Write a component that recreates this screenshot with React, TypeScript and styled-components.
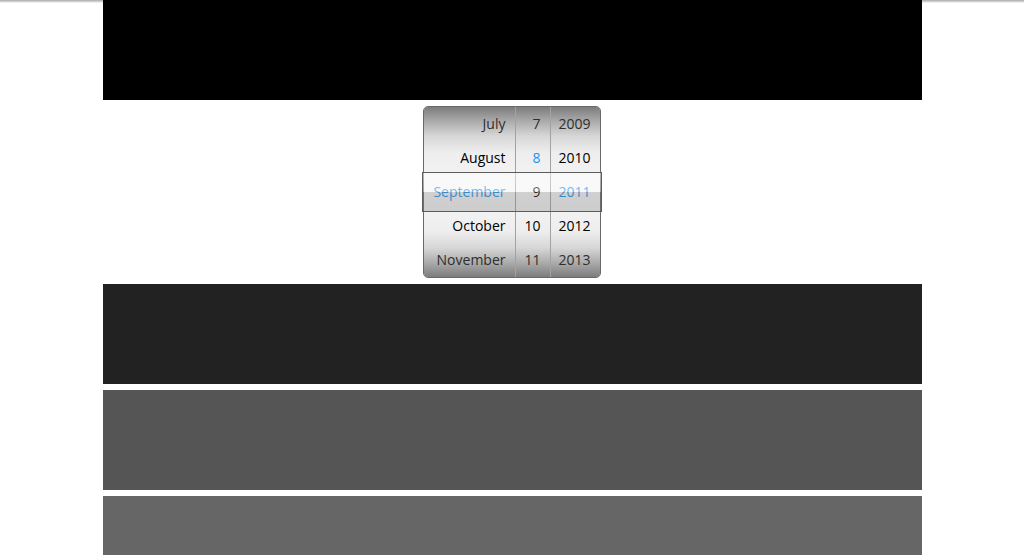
import styled, { createGlobalStyle } from 'styled-components';

interface Cell {
  label: string;
  tone?: 'dim' | 'dark' | 'active';
}

interface Wheel {
  width: number;
  cells: Cell[];
}

const wheels: Wheel[] = [
  {
    width: 91,
    cells: [
      { label: 'July', tone: 'dim' },
      { label: 'August', tone: 'dark' },
      { label: 'September', tone: 'active' },
      { label: 'October', tone: 'dark' },
      { label: 'November', tone: 'dim' },
    ],
  },
  {
    width: 35,
    cells: [
      { label: '7', tone: 'dim' },
      { label: '8', tone: 'active' },
      { label: '9', tone: 'dark' },
      { label: '10', tone: 'dark' },
      { label: '11', tone: 'dim' },
    ],
  },
  {
    width: 50,
    cells: [
      { label: '2009', tone: 'dim' },
      { label: '2010', tone: 'dark' },
      { label: '2011', tone: 'active' },
      { label: '2012', tone: 'dark' },
      { label: '2013', tone: 'dim' },
    ],
  },
];

export default function App() {
  return (
    <>
      <GlobalStyle />
      <Page>
        <Block $shade="#000" />
        <PickerRow>
          <Picker>
            {wheels.map((wheel, i) => (
              <Column key={i} $width={wheel.width} $first={i === 0}>
                {wheel.cells.map((cell) => (
                  <Item key={cell.label} $tone={cell.tone}>
                    {cell.label}
                  </Item>
                ))}
              </Column>
            ))}
            <Selection />
          </Picker>
        </PickerRow>
        <Block $shade="#222" />
        <Block $shade="#555" />
        <Block $shade="#666" />
      </Page>
    </>
  );
}

const GlobalStyle = createGlobalStyle`
  html, body {
    margin: 0;
    padding: 0;
    height: 100%;
    overflow: hidden;
  }
  body {
    font-family: "Open Sans", "DejaVu Sans", sans-serif;
    background: linear-gradient(#a8a8a8 0, #c4c4c4 1px, #dedede 2px, #fff 3px) no-repeat;
    background-color: #fff;
  }
`;

const Page = styled('div')`
  width: 819px;
  margin: 0 auto;
  display: flex;
  flex-direction: column;
  gap: 6px;
`;

const Block = styled('div')<{ $shade: string }>`
  height: 100px;
  background: ${({ $shade }) => $shade};
`;

const PickerRow = styled('div')`
  display: flex;
  justify-content: center;
  padding-right: 1px;
`;

const Picker = styled('div')`
  position: relative;
  display: flex;
  width: 176px;
  height: 170px;
  border: 1px solid #6a6a6a;
  border-radius: 5px;
  background: #fff;
`;

const Column = styled('div')<{ $width: number; $first: boolean }>`
  width: ${({ $width }) => $width}px;
  display: flex;
  flex-direction: column;
  border-left: ${({ $first }) => ($first ? 'none' : '1px solid #a2a2a2')};
  box-sizing: border-box;
  background: linear-gradient(
    #7c7c7c 0%,
    #a9a9a9 8%,
    #d6d6d6 17%,
    #eeeeee 27%,
    #f6f6f6 50%,
    #eeeeee 73%,
    #d6d6d6 83%,
    #a9a9a9 92%,
    #7c7c7c 100%
  );
  &:first-child {
    border-radius: 4px 0 0 4px;
  }
  &:nth-child(3) {
    border-radius: 0 4px 4px 0;
  }
`;

const toneColor = {
  dim: '#2e2e2e',
  dark: '#000',
  active: '#1d93ee',
};

const Item = styled('div')<{ $tone?: Cell['tone'] }>`
  height: 34px;
  line-height: 34px;
  padding-right: 9px;
  text-align: right;
  font-size: 14px;
  color: ${({ $tone }) => toneColor[$tone || 'dark']};
  white-space: nowrap;
`;

const Selection = styled('div')`
  position: absolute;
  left: -2px;
  right: -2px;
  top: 65px;
  height: 38px;
  border: 1px solid #5c5c5c;
  background: linear-gradient(
    rgba(255, 255, 255, 0.5) 0%,
    rgba(255, 255, 255, 0.35) 50%,
    rgba(120, 120, 120, 0.3) 50%,
    rgba(120, 120, 120, 0.3) 100%
  );
  pointer-events: none;
`;
